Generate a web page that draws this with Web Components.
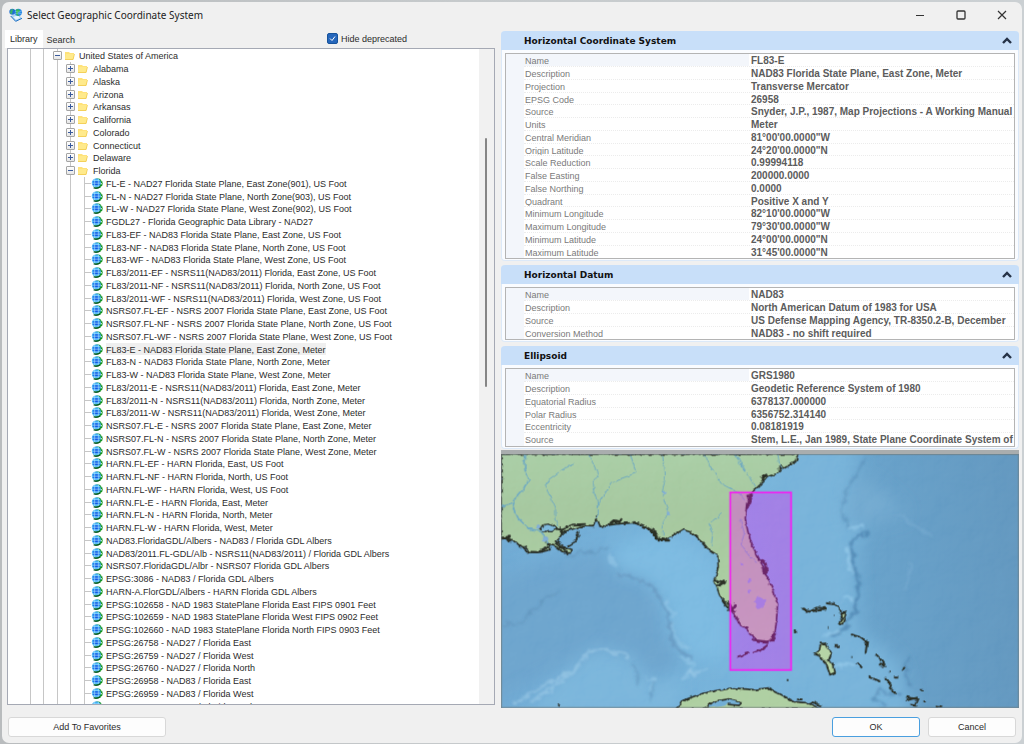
<!DOCTYPE html>
<html lang="en">
<head>
<meta charset="utf-8">
<title>Select Geographic Coordinate System</title>
<style>
html,body{height:100%;margin:0}
body{font-family:"Liberation Sans",Arial,sans-serif;font-size:9px;color:#2b2b2b;background:linear-gradient(90deg,#b9bcbe,#c6cacc 45%,#cbd0d3)}
</style>
</head>
<body>
<geo-dialog></geo-dialog>
<script>
const define = (name, html, setup) => {
  const template = document.createElement('template');
  template.innerHTML = '<style>:host,*{box-sizing:border-box}button,input{font:inherit;color:inherit;margin:0}:host([hidden]){display:none}</style>' + html;
  customElements.define(name, class extends HTMLElement {
    connectedCallback() {
      if (this.shadowRoot) return;
      const root = this.attachShadow({ mode: 'open' });
      root.append(template.content.cloneNode(true));
      if (setup) setup(this, root);
    }
  });
};

define('push-button', `
<style>
:host{display:block;min-width:88px}
button{display:block;width:100%;height:20px;padding:0;background:#fdfdfd;border:1px solid #d8d8d8;border-radius:3px;text-align:center;line-height:18px}
:host([primary]) button{border-color:#4a9fdf}
</style>
<button type="button"><slot></slot></button>`);

define('window-titlebar', `
<style>
:host{display:flex;align-items:center;height:28px;padding:0 0 3px 4px;margin-right:-3px;font:10px "Noto Sans","Open Sans",sans-serif;color:#1c1c1c}
svg{display:block}
h1{font:inherit;margin:0 auto 0 4px}
button{width:41px;height:24px;padding:0;border:0;background:none;display:grid;place-items:center}
</style>
<svg width="14" height="14" viewBox="0 0 42 42"><path d="M5 24 24 15 39 31 20 40Z" fill="#a9d2ef"/><path d="M5 24 20 40 39 31" fill="none" stroke="#1d6fc4" stroke-width="3"/><path d="m13 27 14-5 6 8-12 5Z" fill="#e8f5fd"/><circle cx="10" cy="11" r="9" fill="#1f6fd0"/><path d="M6 5c5-5 8 1 5 4s2 5-3 8-7-5-2-12Z" fill="#39b26b"/><circle cx="28" cy="13" r="11" fill="#2c8be4"/><path d="M24 4c8 0 11 4 7 7s-6 1-5 6 7 4 4 6-10-3-9-9-2-8 3-10Z" fill="#35bb56"/><path d="M18 10q10 4 20 0M18 17q10-3 20 0" stroke="#c9ecff" fill="none"/></svg>
<h1><slot></slot></h1>
<button type="button" aria-label="Minimize"><svg width="10" height="10"><path d="M1 5.500h8" stroke="#333"/></svg></button>
<button type="button" aria-label="Maximize"><svg width="10" height="10"><rect x="1" y="1" width="8" height="8" rx="1" fill="none" stroke="#333" stroke-width="1.3"/></svg></button>
<button type="button" aria-label="Close"><svg width="10" height="10"><path d="m1 1 8 8m0-8-8 8" stroke="#333" stroke-width="1.2"/></svg></button>`);

define('library-tabs', `
<style>
:host{display:flex;align-items:end;height:18px}
[role=tab]{border:0;padding:0 4px;height:16px;line-height:16px;background:none}
[aria-selected=true]{background:#fff;height:18px;padding:0 5px}
label{display:flex;align-items:center;gap:3px;height:18px;margin-left:auto;margin-right:88px;padding-bottom:1px}
input{appearance:none;width:11px;height:11px;border:1px solid #17539b;border-radius:2px;background:#2566bb}
input:checked{background:#2566bb url("data:image/svg+xml,%3Csvg xmlns='http://www.w3.org/2000/svg' viewBox='0 0 9 9'%3E%3Cpath d='m2 4.5 2 2 3-4' fill='none' stroke='white'/%3E%3C/svg%3E") center/9px}
</style>
<button role="tab" aria-selected="true">Library</button><button role="tab" aria-selected="false">Search</button>
<label><input type="checkbox" checked> Hide deprecated</label>`);

const folder = '<svg width="11" height="9" viewBox="0 0 11 9"><path d="M1 8V1h4l1 1h4v5l-1 2H1Z" fill="#ffe27a"/><path d="M1 8 2 3H10.500L9 8.500H1Z" fill="#ffea8c"/><path d="M1 8.500h8l1.500-5.500" fill="none" stroke="#efc74a" stroke-width=".7"/></svg>';
const globe = '<svg width="12" height="11" viewBox="0 0 36 33"><circle cx="20" cy="16.500" r="15" fill="#129222"/><path d="M31 6v21" stroke="#d4f7d0" stroke-width="3" stroke-dasharray="4 5"/><circle cx="16" cy="15" r="13.500" fill="#35a6f4"/><path d="M7 10h18v12H7Z" fill="#1458e6"/><path d="M2 15.500h28M6 7h20M6 24h20M11 3v25M22 3v25" stroke="#a5e6ff" stroke-width="2"/><path d="M8 29q9 5 19-3" fill="none" stroke="#0b5a24" stroke-width="4"/></svg>';

define('coordinate-tree', `
<style>
:host{display:flex;flex:1;min-height:0;border:1px solid #a5a9b4;background:#fff;overflow:hidden}
ul{list-style:none;margin:0;padding:0 0 0 22px;flex:1;min-width:0;height:0;white-space:nowrap}
li{display:flex;height:13px;line-height:14px;align-items:stretch}
li:nth-child(4n){height:12px}
i{width:13px;border-left:1px solid #c6c6c6;flex:none}
i:nth-of-type(2n){width:14px}
.node{display:flex;align-items:center;width:22px;border-left:1px solid #c6c6c6;flex:none}
li[aria-level="4"] .node{width:23px}
.node::before{content:"";width:6px;border-top:1px solid #c6c6c6}
li[aria-expanded] .node::before{display:none}
button{width:9px;height:9px;margin:0 2px 0 -5px;padding:0;border:1px solid #a5a5a5;border-radius:1px;background:linear-gradient(#fff,#e6e6e6);display:grid;place-items:center;flex:none}
svg{display:block;flex:none}
[aria-selected=true] span:last-child{background:#efefef}
.scroll{width:15px;background:#f1f1f1;padding:89px 6px 317px}
.thumb{width:2px;height:100%;background:#868686;border-radius:1px}
</style>
<ul role="tree" aria-label="Coordinate systems"></ul><div class="scroll"><div class="thumb"></div></div>`, (host, root) => {
  const folders = ['United States of America','Alabama','Alaska','Arizona','Arkansas','California','Colorado','Connecticut','Delaware','Florida'];
  const leaves = `FL-E - NAD27 Florida State Plane, East Zone(901), US Foot
FL-N - NAD27 Florida State Plane, North Zone(903), US Foot
FL-W - NAD27 Florida State Plane, West Zone(902), US Foot
FGDL27 - Florida Geographic Data Library - NAD27
FL83-EF - NAD83 Florida State Plane, East Zone, US Foot
FL83-NF - NAD83 Florida State Plane, North Zone, US Foot
FL83-WF - NAD83 Florida State Plane, West Zone, US Foot
FL83/2011-EF - NSRS11(NAD83/2011) Florida, East Zone, US Foot
FL83/2011-NF - NSRS11(NAD83/2011) Florida, North Zone, US Foot
FL83/2011-WF - NSRS11(NAD83/2011) Florida, West Zone, US Foot
NSRS07.FL-EF - NSRS 2007 Florida State Plane, East Zone, US Foot
NSRS07.FL-NF - NSRS 2007 Florida State Plane, North Zone, US Foot
NSRS07.FL-WF - NSRS 2007 Florida State Plane, West Zone, US Foot
FL83-E - NAD83 Florida State Plane, East Zone, Meter
FL83-N - NAD83 Florida State Plane, North Zone, Meter
FL83-W - NAD83 Florida State Plane, West Zone, Meter
FL83/2011-E - NSRS11(NAD83/2011) Florida, East Zone, Meter
FL83/2011-N - NSRS11(NAD83/2011) Florida, North Zone, Meter
FL83/2011-W - NSRS11(NAD83/2011) Florida, West Zone, Meter
NSRS07.FL-E - NSRS 2007 Florida State Plane, East Zone, Meter
NSRS07.FL-N - NSRS 2007 Florida State Plane, North Zone, Meter
NSRS07.FL-W - NSRS 2007 Florida State Plane, West Zone, Meter
HARN.FL-EF - HARN Florida, East, US Foot
HARN.FL-NF - HARN Florida, North, US Foot
HARN.FL-WF - HARN Florida, West, US Foot
HARN.FL-E - HARN Florida, East, Meter
HARN.FL-N - HARN Florida, North, Meter
HARN.FL-W - HARN Florida, West, Meter
NAD83.FloridaGDL/Albers - NAD83 / Florida GDL Albers
NAD83/2011.FL-GDL/Alb - NSRS11(NAD83/2011) / Florida GDL Albers
NSRS07.FloridaGDL/Albr - NSRS07 Florida GDL Albers
EPSG:3086 - NAD83 / Florida GDL Albers
HARN-A.FlorGDL/Albers - HARN Florida GDL Albers
EPSG:102658 - NAD 1983 StatePlane Florida East FIPS 0901 Feet
EPSG:102659 - NAD 1983 StatePlane Florida West FIPS 0902 Feet
EPSG:102660 - NAD 1983 StatePlane Florida North FIPS 0903 Feet
EPSG:26758 - NAD27 / Florida East
EPSG:26759 - NAD27 / Florida West
EPSG:26760 - NAD27 / Florida North
EPSG:26958 - NAD83 / Florida East
EPSG:26959 - NAD83 / Florida West
EPSG:26960 - NAD83 / Florida North`.split('\n');
  const row = (text, guides, attrs, node) =>
    `<li role="treeitem" aria-level="${guides + 1}" ${attrs}>${'<i></i>'.repeat(guides)}<span class="node">${node}</span><span>${text}</span></li>`;
  root.querySelector('ul').innerHTML =
    folders.map((name, k) => {
      const open = k === 0 || name === 'Florida';
      const sign = `<svg width="7" height="7"><path d="M1 3.500h5${open ? '' : 'M3.500 1v5'}" stroke="#3a5a9c"/></svg>`;
      return row(name, k ? 3 : 2, `aria-expanded="${open}"`, `<button type="button" aria-label="Toggle ${name}">${sign}</button>${folder}`);
    }).join('') +
    leaves.map(name => row(name, 4, name.startsWith('FL83-E -') ? 'aria-selected="true"' : '', globe)).join('');
});

define('property-panel', `
<style>
:host{display:block;flex:none;background:#fafcff;border:1px solid #dce9f8;border-top:0;border-radius:4px;padding-bottom:1px}
h2{display:flex;align-items:center;justify-content:space-between;margin:0 -1px;height:19px;padding:0 6px 0 23px;background:#c8dff9;border-radius:4px 4px 0 0;font:bold 9px "DejaVu Sans",sans-serif;color:#111}
h2 button{border:0;background:none;padding:0;width:12px;height:12px;display:grid;place-items:center}
.box{margin:3px 3px 0;border:1px solid #b4b4b4;padding-left:18px;background:linear-gradient(90deg,#f3f6fb 18px,#fff 18px);overflow:hidden}
table{width:100%;border-collapse:collapse;table-layout:fixed;color:#7a7a7a}
tr{display:flex;height:13px;border-bottom:1px dotted #ececec}
tr:nth-child(4n){height:12px}
tr:last-child{border-bottom-color:transparent}
th,td{padding:0;white-space:nowrap;text-align:left;overflow:hidden;line-height:14px}
th{flex:0 0 225px;padding-left:1px;font-weight:normal}
tr:first-child th{background:#f3f6fb}
td{flex:1;padding-left:2px;font-weight:bold;font-size:10px;color:#5c5c5c}
</style>
<h2><span></span><button type="button" aria-label="Collapse"><svg width="10" height="8"><path d="m1 6 4-4 4 4" fill="none" stroke="#253247" stroke-width="2.4"/></svg></button></h2>
<div class="box"><table><tbody></tbody></table></div>`, (host, root) => {
  const data = {
    'Horizontal Coordinate System': [['Name','FL83-E'],['Description','NAD83 Florida State Plane, East Zone, Meter'],['Projection','Transverse Mercator'],['EPSG Code','26958'],['Source','Snyder, J.P., 1987, Map Projections - A Working Manual'],['Units','Meter'],['Central Meridian','81°00\'00.0000"W'],['Origin Latitude','24°20\'00.0000"N'],['Scale Reduction','0.99994118'],['False Easting','200000.0000'],['False Northing','0.0000'],['Quadrant','Positive X and Y'],['Minimum Longitude','82°10\'00.0000"W'],['Maximum Longitude','79°30\'00.0000"W'],['Minimum Latitude','24°00\'00.0000"N'],['Maximum Latitude','31°45\'00.0000"N']],
    'Horizontal Datum': [['Name','NAD83'],['Description','North American Datum of 1983 for USA'],['Source','US Defense Mapping Agency, TR-8350.2-B, December'],['Conversion Method','NAD83 - no shift required']],
    'Ellipsoid': [['Name','GRS1980'],['Description','Geodetic Reference System of 1980'],['Equatorial Radius','6378137.000000'],['Polar Radius','6356752.314140'],['Eccentricity','0.08181919'],['Source','Stem, L.E., Jan 1989, State Plane Coordinate System of']]
  };
  const heading = host.getAttribute('heading');
  root.querySelector('h2 span').textContent = heading;
  root.querySelector('tbody').innerHTML = data[heading].map(([k, v]) => `<tr><th scope="row">${k}</th><td>${v}</td></tr>`).join('');
});

define('extent-map', `
<style>
:host{display:block;flex:1;min-height:0;border-top:4px solid #a9adae;overflow:hidden}
svg{display:block;width:100%;height:100%}
</style>
<svg viewBox="3 12 1557 762" preserveAspectRatio="none" role="img" aria-label="Extent of the coordinate system">
<defs>
<linearGradient id="sea" x1="0" x2="1" y1="0" y2="0"><stop offset="0" stop-color="#68a5d1"/><stop offset=".5" stop-color="#6fafd9"/><stop offset=".6" stop-color="#6dacd6"/><stop offset=".72" stop-color="#5f9bc6"/><stop offset="1" stop-color="#5a91bb"/></linearGradient>
<linearGradient id="ground" x1="0" x2="0" y1="0" y2="1"><stop offset="0" stop-color="#a4cba0"/><stop offset=".3" stop-color="#a0c499"/><stop offset="1" stop-color="#aacf9d"/></linearGradient>
<filter id="rough" x="-5%" y="-5%" width="110%" height="110%"><feTurbulence type="fractalNoise" baseFrequency=".05" numOctaves="3" seed="4"/><feDisplacementMap in="SourceGraphic" scale="14" xChannelSelector="R" yChannelSelector="G"/></filter>
<filter id="ridge" x="-5%" y="-5%" width="110%" height="110%"><feTurbulence type="fractalNoise" baseFrequency=".04" numOctaves="3" seed="7"/><feDisplacementMap in="SourceGraphic" scale="34" xChannelSelector="R" yChannelSelector="G"/><feGaussianBlur stdDeviation="2.500"/></filter>
<filter id="soft" x="-20%" y="-20%" width="140%" height="140%"><feGaussianBlur stdDeviation="26"/></filter>
<filter id="relief" x="0" y="0" width="100%" height="100%"><feTurbulence type="fractalNoise" baseFrequency=".012" numOctaves="4" seed="9"/><feDiffuseLighting surfaceScale="9" lighting-color="#fff"><feDistantLight azimuth="225" elevation="55"/></feDiffuseLighting></filter>
</defs>
<rect x="3" y="12" width="1557" height="762" fill="url(#sea)"/>
<g filter="url(#soft)">
<path d="M-60 400 130 340 320 300 345 360 430 385 480 430 510 570 560 640 450 690 400 620 290 590 200 650-60 780Z" fill="#659fca"/>
<path d="M330 290 450 250 550 260 640 330 690 500V640L560 620 510 540 490 450 440 390 350 360Z" fill="#74b6df"/>
<path d="M280 600 400 620 440 700 540 690 520 800H60L180 690Z" fill="#73b1d9"/>
<path d="M880-20H1090L1040 120 1030 220 1110 240 1060 290 1075 450 1060 520 1200 640 1240 800H980L850 690 850 400 780 200Z" fill="#70aed7"/>
<path d="M1110 90 1220 190 1140 210 1040 220 1050 120Z" fill="#6ca5cd"/>
</g>
<g fill="none" stroke-width="7" filter="url(#ridge)">
<path d="M350 365 400 385 455 405 480 440 500 490 515 560 540 605 580 625" stroke="#5c8fb9" opacity=".8"/>
<path d="M325 320 355 350M495 450 525 500M512 520 535 575 570 600M540 620 590 640 550 690M440 690 465 680 450 720" stroke="#8bc2e4" opacity=".7"/>
<path d="M3 525 60 520 90 490 130 450 180 425M200 320 330 290M400 640 415 670 410 710M460 690 455 750" stroke="#5487b1" opacity=".55"/>
<path d="M50 760 130 705 220 665 260 610 300 595 340 605 390 620M190 690 90 760M560 670 620 660" stroke="#9ccbe8" opacity=".55" stroke-width="9"/>
<path d="M1105 20 1065 85 1032 135 1030 190 1050 235" stroke="#4c83ae" opacity=".55"/>
<path d="M1110 243 1065 265 1056 285 1062 340 1078 390 1072 465 1042 530 1000 565" stroke="#3f76a5" opacity=".7" stroke-width="9"/>
<path d="M1050 230 1095 232M1046 300 1052 360M1030 450 1060 440M970 560 1020 545M1000 650 1060 640" stroke="#90c8ea" opacity=".7" stroke-width="9"/>
<path d="M1200 190 1230 220 1300 260M1235 340 1220 420" stroke="#7fb3d6" opacity=".35" stroke-width="10"/>
<path d="M1235 615 1215 660 1235 715M1155 774 1120 745 1150 720 1200 735" stroke="#477daa" opacity=".6"/>
</g>
<g filter="url(#rough)">
<path d="M3 12H896L888 36 862 50 845 60 825 74 803 82 792 95 765 120 752 135 742 160 737 205 745 245 760 290 783 335 807 390 824 428 834 465 831 510 827 545 812 572 790 578 768 574 758 553 743 536 724 526 710 502 693 483 675 458 660 435 652 412 643 394 656 352 654 318 630 302 605 272 577 248 550 239 515 259 490 270 470 264 455 241 430 228 400 218 350 222 301 229 290 201 283 230 242 229 210 240 188 246 181 260 166 273 192 290 216 299 214 309 192 309 170 291 142 279 150 299 120 307 92 307 74 291 59 290 39 270 3 263Z" fill="url(#ground)" stroke="#20251f" stroke-width="5"/>
<path d="M526 778 560 748 605 731 650 722 700 714 762 719 807 714 845 734 884 755 922 758 967 778Z" fill="#a9cc9c" stroke="#20251f" stroke-width="5"/>
<path d="M620 773 642 754 686 747 725 756 720 766 684 763" fill="#6ba9d2" stroke="#20251f" stroke-width="5"/>
<path d="M964 577 977 578 993 610 984 632 1003 644 1007 668 992 674 979 639 960 618 946 612 960 602Z" fill="#afd09e" stroke="#20251f" stroke-width="5"/>
<path d="M1022 490 1041 484 1036 503 1028 524 1018 520 1028 506Z" fill="#adc897" stroke="#20251f" stroke-width="5"/>
<path d="M908 475 930 485 955 473 983 475M927 485 980 479M980 459 1008 463 1032 489M1052 553 1079 560 1103 579 1099 609M1129 611 1150 634 1157 645 1139 644M1108 681 1143 695M1157 682 1173 700 1169 711 1191 733M1074 638 1088 657M1008 588H1024M1210 660 1216 648M1184 680H1197M1221 741 1257 748 1248 767 1230 764M1222 751 1255 742M1262 720H1271M1273 754H1283M1308 767 1329 770M886 538 887 551M1003 497H1005M983 537H985M1056 621H1059M1168 668H1174M865 690H870M890 748H909M924 761 940 757 967 768" fill="none" stroke="#20251f" stroke-width="6"/>
<path d="M122 238 132 224 148 222 171 236 157 245 132 244Z" fill="#75b4d9" stroke="#20251f" stroke-width="4"/>
<path d="M168 241 190 236 219 224 258 222M231 243 236 260 225 275 203 287M166 279 194 299 207 315M174 291 205 294M173 761 180 769M711 621 750 609M760 609 782 601 806 584M814 574 827 561M60 285 80 305 115 306 145 291M180 244 200 248M180 230 195 247" fill="none" stroke="#20251f" stroke-width="6"/>
<path d="M646 390 673 397 654 409M684 455 697 480 707 463M683 475 711 489M330 222 342 212 358 216 368 207M400 218 418 219M445 234 466 247 478 270 511 270M783 83 805 74M791 73 789 95M741 139 755 137 742 174M783 329 797 341 800 364 792 371M811 571 830 549M757 571 810 578M3 265 25 262 30 276M844 60V46" fill="none" stroke="#20251f" stroke-width="9"/>
</g>
<g fill="none" stroke="#66a4bd" stroke-width="3" filter="url(#rough)">
<path d="M77 12 74 55 88 90 68 120 45 147 38 171 55 205 85 235 125 245 144 280M3 171 38 160" stroke-width="5"/><path d="M222 42 190 57 146 89 136 107 152 139 167 176 168 205 177 231M267 12 295 74 277 107 292 157 292 205M392 12 409 69 363 86 335 99 303 151 293 169M489 12 495 93 487 129 505 188 490 218 490 260M613 12 642 63 662 98 714 125 736 151M706 12 727 51 747 76 765 110M666 191 628 221 640 248 635 285M835 12 840 42 848 60M722 210 734 251 724 286 750 319 772 335M710 12 737 61"/>
</g>
<g fill="#79a8d2" filter="url(#rough)"><path d="M762 457 777 440 797 449 795 467 777 478Z"/><circle cx="726" cy="341" r="5"/><circle cx="750" cy="390" r="6"/><circle cx="750" cy="426" r="5"/><circle cx="117" cy="230" r="7"/><circle cx="137" cy="267" r="8"/><circle cx="492" cy="128" r="5"/><circle cx="507" cy="190" r="6"/></g>
<rect x="3" y="12" width="1557" height="762" filter="url(#relief)" style="mix-blend-mode:soft-light" opacity=".2"/>
<rect x="692" y="127" width="183" height="533" fill="#ff10ff" fill-opacity=".31" stroke="#f51cf2" stroke-width="5"/>
<rect x="4" y="13" width="1555" height="760" fill="none" stroke="#737b7d" stroke-width="3"/>
</svg>`);

define('geo-dialog', `
<style>
:host{display:flex;flex-direction:column;height:100vh;padding:2px 2px 1px}
.window{display:flex;flex-direction:column;flex:1;min-height:0;background:#f0f0f0;border-radius:7px;overflow:hidden;padding:0 3px}
main{display:grid;grid-template-columns:minmax(0,490fr) minmax(0,518fr);grid-template-rows:minmax(0,1fr);gap:6px;flex:1;min-height:0}
.left{display:flex;flex-direction:column;min-height:0;padding:0 0 3px 2px}
library-tabs{margin-left:-2px}
.right{display:flex;flex-direction:column;gap:4px;min-height:0;padding-top:1px}
extent-map{margin-top:-3px}
footer{display:flex;gap:8px;padding:9px 3px 6px}
.add{width:158px;margin-right:auto}
</style>
<div class="window">
<window-titlebar>Select Geographic Coordinate System</window-titlebar>
<main>
<section class="left"><library-tabs></library-tabs><coordinate-tree></coordinate-tree></section>
<section class="right"><property-panel heading="Horizontal Coordinate System"></property-panel><property-panel heading="Horizontal Datum"></property-panel><property-panel heading="Ellipsoid"></property-panel><extent-map></extent-map></section>
</main>
<footer><push-button class="add">Add To Favorites</push-button><push-button primary>OK</push-button><push-button>Cancel</push-button></footer>
</div>`);
</script>
</body>
</html>
